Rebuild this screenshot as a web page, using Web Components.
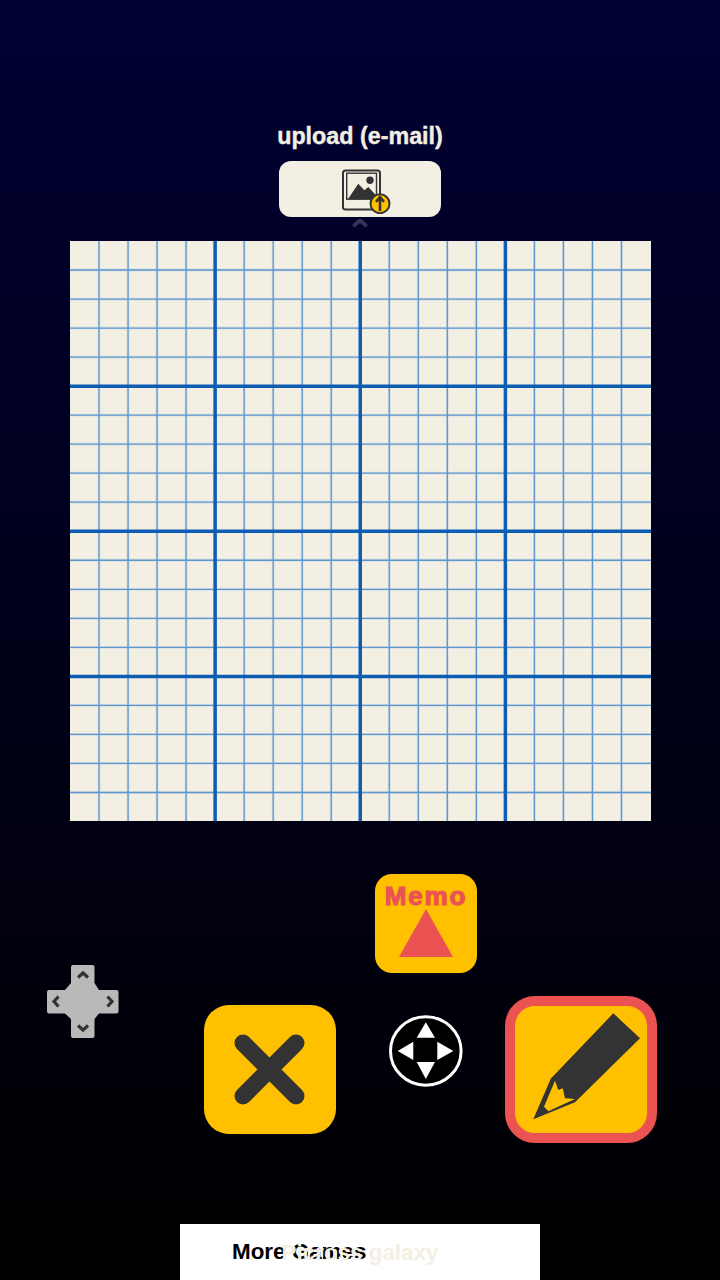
<!DOCTYPE html>
<html>
<head>
<meta charset="utf-8">
<style>
html, body { margin: 0; padding: 0; }
body {
    width: 720px;
    height: 1280px;
    overflow: hidden;
    background: linear-gradient(#000033, #000000);
    font-family: "Liberation Sans", Arial, sans-serif;
}
</style>
</head>
<body>
<game-screen>
    <upload-panel label="upload (e-mail)"></upload-panel>
    <sketch-grid cells="20"></sketch-grid>
    <control-panel></control-panel>
    <more-bar label="More Games" brand="Picross galaxy"></more-bar>
</game-screen>
<script>
class GameScreen extends HTMLElement {
    constructor() {
        super()
        this.attachShadow({ mode: 'open' })
    }
    connectedCallback() {
        this.shadowRoot.innerHTML = `
            <style>
                :host {
                    display: flex;
                    flex-direction: column;
                    width: 720px;
                    height: 1280px;
                }
            </style>
            <slot></slot>
        `
    }
}
customElements.define('game-screen', GameScreen)

class UploadPanel extends HTMLElement {
    constructor() {
        super()
        this.attachShadow({ mode: 'open' })
    }
    connectedCallback() {
        this.shadowRoot.innerHTML = `
            <style>
                :host {
                    display: flex;
                    flex-direction: column;
                    align-items: center;
                    height: 241px;
                    padding-top: 123px;
                    box-sizing: border-box;
                    color: #f3efe3;
                }
                .label {
                    font-size: 23.3px;
                    line-height: 26px;
                    font-weight: bold;
                    -webkit-text-stroke: 0.4px #f3efe3;
                }
                .button {
                    position: relative;
                    width: 162px;
                    height: 56px;
                    margin-top: 12px;
                    background: #f3efe3;
                    border-radius: 12px;
                }
                .button svg.icon {
                    position: absolute;
                    left: 62px;
                    top: 7px;
                }
                .chevron {
                    position: absolute;
                    left: 72px;
                    top: 56px;
                }
            </style>
            <div class="label">${this.getAttribute('label')}</div>
            <div class="button">
                <svg class="icon" width="52" height="46" viewBox="0 0 52 46">
                    <rect x="2" y="2.500" width="37" height="39" rx="2.500" fill="none" stroke="#333" stroke-width="2"/>
                    <rect x="5.700" y="5.200" width="29.800" height="26" fill="none" stroke="#333" stroke-width="1.400"/>
                    <circle cx="29" cy="12.300" r="3.700" fill="#333"/>
                    <path d="M7 31 L17.300 15.700 L23.300 22.300 L27.300 19 L35 27.300 V31 Z" fill="#333"/>
                    <circle cx="39" cy="35.700" r="9.500" fill="#ffc000" stroke="#333" stroke-width="2"/>
                    <path d="M39 43 V29.500 M35 33.800 L39 29 L43 33.800" fill="none" stroke="#333" stroke-width="2.600"/>
                </svg>
                <svg class="chevron" width="18" height="12" viewBox="0 0 18 12">
                    <path d="M3.500 8 L9 3.500 L14.500 8" fill="none" stroke="#33335a" stroke-width="4" stroke-linecap="round" stroke-linejoin="round"/>
                </svg>
            </div>
        `
    }
}
customElements.define('upload-panel', UploadPanel)

class SketchGrid extends HTMLElement {
    constructor() {
        super()
        this.attachShadow({ mode: 'open' })
    }
    connectedCallback() {
        let n = Number(this.getAttribute('cells'))
        let step = 580.5 / n
        let halo = ''
        let minor = ''
        let major = ''
        for (let i = 1; i < n; i++) {
            let p = (i * step).toFixed(2)
            let d = `M${p} 0 V580 M0 ${p} H581`
            if (i % 5 == 0) {
                major += `<path d="${d}" stroke="#0d5db5" stroke-width="3.500"/>`
            } else {
                halo += `<path d="${d}" stroke="#bcd3e8" stroke-width="2.800" opacity="0.5"/>`
                minor += `<path d="${d}" stroke="#5f97cc" stroke-width="1.300"/>`
            }
        }
        this.shadowRoot.innerHTML = `
            <style>
                :host {
                    display: block;
                    width: 581px;
                    height: 580px;
                    margin-left: 70px;
                    background: #f3efe3;
                }
                svg { display: block; }
            </style>
            <svg width="581" height="580" viewBox="0 0 581 580">
                ${halo}${minor}${major}
            </svg>
        `
    }
}
customElements.define('sketch-grid', SketchGrid)

class ControlPanel extends HTMLElement {
    constructor() {
        super()
        this.attachShadow({ mode: 'open' })
    }
    connectedCallback() {
        this.shadowRoot.innerHTML = `
            <style>
                :host {
                    display: flex;
                    align-items: flex-start;
                    height: 403px;
                    padding: 53px 0 0 47px;
                    box-sizing: border-box;
                }
                svg { display: block; }
                .dpad { margin-top: 91px; }
                .key {
                    background: #ffc000;
                    box-sizing: border-box;
                }
                .cross {
                    width: 132px;
                    height: 129px;
                    margin: 131px 0 0 85px;
                    border-radius: 25px;
                }
                .middle {
                    display: flex;
                    flex-direction: column;
                    align-items: center;
                    gap: 42px;
                    width: 102px;
                    margin-left: 39px;
                }
                .memo {
                    display: flex;
                    flex-direction: column;
                    align-items: center;
                    width: 102px;
                    height: 99px;
                    padding-top: 9px;
                    border-radius: 17px;
                    color: #eb5353;
                    font-size: 26px;
                    line-height: 26px;
                    font-weight: bold;
                    letter-spacing: 1.800px;
                    -webkit-text-stroke: 1.200px #eb5353;
                }
                .pencil {
                    width: 152px;
                    height: 147px;
                    margin: 122px 0 0 28px;
                    border: 10px solid #eb5353;
                    border-radius: 30px;
                }
            </style>
            <svg class="dpad" width="72" height="73" viewBox="0 0 72 73">
                <path d="M26 0 H45.500 Q47.500 0 47.500 2 V18 L52 25 H69.500 Q71.500 25 71.500 27 V46.500 Q71.500 48.500 69.500 48.500 H52 L47.500 54 V71 Q47.500 73 45.500 73 H26 Q24 73 24 71 V54 L18 48.500 H2 Q0 48.500 0 46.500 V27 Q0 25 2 25 H18 L24 18 V2 Q24 0 26 0 Z" fill="#b9b9b9"/>
                <g fill="none" stroke="#333" stroke-width="3.200">
                    <path d="M31 12.500 L36 8 L41 12.500"/>
                    <path d="M31 60.500 L36 65 L41 60.500"/>
                    <path d="M11.500 31.500 L7 36.500 L11.500 41.500"/>
                    <path d="M60.500 31.500 L65 36.500 L60.500 41.500"/>
                </g>
            </svg>
            <div class="key cross">
                <svg width="132" height="129" viewBox="0 0 132 129">
                    <path d="M39 38 L92 91 M92 38 L39 91" stroke="#333" stroke-width="17" stroke-linecap="round"/>
                </svg>
            </div>
            <div class="middle">
                <div class="key memo">
                    Memo
                    <svg width="56" height="49" viewBox="0 0 56 49">
                        <path d="M28 0 L55 48 H1 Z" fill="#eb5353" stroke="none"/>
                    </svg>
                </div>
                <svg width="74" height="72" viewBox="0 0 74 72">
                    <ellipse cx="36.800" cy="36" rx="35.300" ry="34.200" fill="#000" stroke="#fff" stroke-width="3"/>
                    <path d="M36.800 7.300 L46 22.700 H27.700 Z M36.800 64 L27.700 47 H46 Z M8.700 36 L24.300 26.700 V45 Z M64.300 36 L48.300 26.700 V45 Z" fill="#fff"/>
                </svg>
            </div>
            <div class="key pencil">
                <svg width="132" height="127" viewBox="0 0 132 127">
                    <path d="M98.300 7.300 L125 32.300 L60 96.300 L18.300 113.300 L36 72.300 L39.300 69 Z" fill="#333"/>
                    <path d="M40 74.700 L29 100.700 L33.300 105.300 L60 93 L50 92.300 L47.700 82.300 L43.300 84 Z" fill="#ffc000"/>
                </svg>
            </div>
        `
    }
}
customElements.define('control-panel', ControlPanel)

class MoreBar extends HTMLElement {
    constructor() {
        super()
        this.attachShadow({ mode: 'open' })
    }
    connectedCallback() {
        this.shadowRoot.innerHTML = `
            <style>
                :host {
                    display: block;
                    position: relative;
                    width: 360px;
                    height: 56px;
                    margin-left: 180px;
                    background: #fff;
                    font-size: 22.400px;
                    font-weight: bold;
                    line-height: 56px;
                }
                .label {
                    padding-left: 52px;
                    color: #000;
                }
                .brand {
                    position: absolute;
                    left: 0;
                    right: 0;
                    top: 1px;
                    text-align: center;
                    color: #f3efe3;
                }
            </style>
            <div class="label">${this.getAttribute('label')}</div>
            <div class="brand">${this.getAttribute('brand')}</div>
        `
    }
}
customElements.define('more-bar', MoreBar)
</script>
</body>
</html>
